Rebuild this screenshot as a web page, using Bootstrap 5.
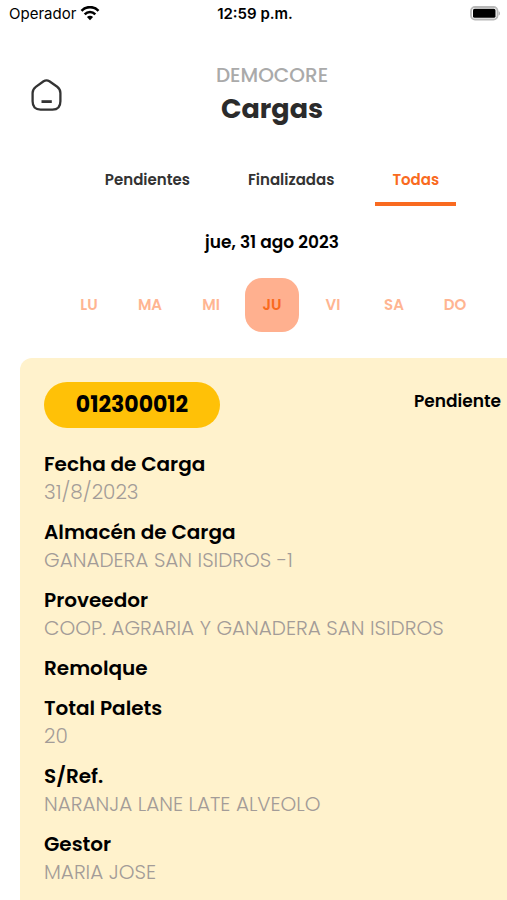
<!DOCTYPE html>
<html lang="es">
<head>
<meta charset="utf-8">
<meta name="viewport" content="width=device-width, initial-scale=1">
<title>Cargas</title>
<link href="https://cdn.jsdelivr.net/npm/bootstrap@5.3.0/dist/css/bootstrap.min.css" rel="stylesheet">
<style>
  body { font-family: Poppins, Inter, "Open Sans", sans-serif; color: #000; background: #fff; }
  .status-bar { height: 28px; font-family: Inter, sans-serif; font-size: 15px; line-height: 28px; padding: 0 6px 0 9px; }
  .status-side { flex: 1 1 0; }
  .app-header { padding: 34px 25px 0 31px; }
  .home-btn { margin-bottom: 2px; line-height: 0; }
  .company { font-size: 20px; line-height: 27px; color: #aaa; font-weight: 500; }
  .page-title { font-size: 27px; line-height: 40px; font-weight: 700; color: #2b2b2b; }
  .view-tabs { gap: 24px; padding: 33px 25px 0 62px; }
  .view-tabs .nav-link { padding: 6px 17px 10px; font-size: 15px; line-height: 24px; font-weight: 600; color: #333; border-bottom: 4px solid transparent; }
  .view-tabs .nav-link.active { color: #f96a20; border-color: #f96a20; }
  .day-title { font-size: 17px; line-height: 26px; font-weight: 600; padding: 23px 0 23px 37px; }
  .week { padding: 0 25px 0 62px; gap: 7px; }
  .day { width: 54px; height: 54px; border-radius: 17px; font-size: 15px; font-weight: 600; color: #ffb592; background: none; }
  .day[aria-pressed="true"] { background: #ffb08f; color: #f96a20; }
  .load-card { margin: 26px 0 0 20px; padding: 24px 6px 14px 24px; background: #fff2cc; border-radius: 12px 0 0 0; }
  .load-number { min-width: 176px; height: 46px; line-height: 46px; font-size: 22px; font-weight: 700; background: #ffc107; }
  .load-state { font-size: 17px; line-height: 38px; font-weight: 600; }
  .fields { font-size: 20px; line-height: 28px; padding-top: 22px; }
  .fields > div { margin-bottom: 12px; }
  .fields dt { font-weight: 600; }
  .fields dd { font-weight: 300; color: #a39c98; }
</style>
<script src="https://cdn.jsdelivr.net/npm/bootstrap@5.3.0/dist/js/bootstrap.bundle.min.js" defer></script>
</head>
<body class="d-flex flex-column min-vh-100">
  <div class="status-bar d-flex align-items-center">
    <div class="status-side d-flex align-items-center gap-1">
      <span>Operador</span>
      <svg width="20" height="16" viewBox="0 0 20 16" fill="none" stroke="#000" stroke-width="2.6" aria-label="Wi-Fi" role="img">
        <path d="M1.5 4.8C6.2-.1 13.8-.1 18.5 4.8"/>
        <path d="M4.7 8.3C7.7 5.3 12.3 5.3 15.3 8.3"/>
        <path d="M10 14.2L6.9 11C8.7 9.3 11.3 9.3 13.1 11Z" fill="#000" stroke="none"/>
      </svg>
    </div>
    <span class="fw-semibold">12:59 p.m.</span>
    <div class="status-side d-flex justify-content-end">
      <svg width="32" height="16" viewBox="0 0 32 16" role="img" aria-label="Batería">
        <rect x="2" y="1" width="26.5" height="12.5" rx="4" fill="#fff" stroke="#b8b8b8" stroke-width="1.8"/>
        <rect x="4" y="2.8" width="22.5" height="9" rx="1.6" fill="#000"/>
        <path d="M29.6 5.2C31.4 5.7 31.4 9.1 29.6 9.6Z" fill="#b0b0b0"/>
      </svg>
    </div>
  </div>

  <header class="app-header d-flex align-items-center">
    <button type="button" class="home-btn btn p-0 border-0" aria-label="Inicio">
      <svg width="31" height="32" viewBox="0 0 31 32" fill="none" stroke="#333" stroke-width="2.3" stroke-linejoin="round">
        <path d="M12.6 2.2Q15.5.4 18.4 2.2L26.2 7.8Q29.4 10.2 29.4 14V22.2Q29.4 30.6 21.5 30.6H9.5Q1.6 30.6 1.6 22.2V14Q1.6 10.2 4.8 7.8Z"/>
        <path d="M10.5 22.6H20.8" stroke-width="2.8"/>
      </svg>
    </button>
    <div class="flex-grow-1 text-center">
      <div class="company">DEMOCORE</div>
      <h1 class="page-title m-0">Cargas</h1>
    </div>
  </header>

  <nav class="view-tabs nav justify-content-center">
    <a class="nav-link" href="#pendientes">Pendientes</a>
    <a class="nav-link" href="#finalizadas">Finalizadas</a>
    <a class="nav-link active" href="#todas" aria-current="page">Todas</a>
  </nav>

  <main class="d-flex flex-column flex-grow-1" id="todas">
    <h2 class="day-title m-0 text-center">jue, 31 ago 2023</h2>
    <div class="week d-flex justify-content-center">
      <button type="button" class="day btn p-0 border-0" aria-pressed="false">LU</button>
      <button type="button" class="day btn p-0 border-0" aria-pressed="false">MA</button>
      <button type="button" class="day btn p-0 border-0" aria-pressed="false">MI</button>
      <button type="button" class="day btn p-0 border-0" aria-pressed="true">JU</button>
      <button type="button" class="day btn p-0 border-0" aria-pressed="false">VI</button>
      <button type="button" class="day btn p-0 border-0" aria-pressed="false">SA</button>
      <button type="button" class="day btn p-0 border-0" aria-pressed="false">DO</button>
    </div>

    <article class="load-card flex-grow-1">
      <div class="d-flex justify-content-between align-items-start">
        <span class="load-number rounded-pill text-center">012300012</span>
        <span class="load-state">Pendiente</span>
      </div>
      <dl class="fields m-0">
        <div><dt>Fecha de Carga</dt><dd class="m-0">31/8/2023</dd></div>
        <div><dt>Almacén de Carga</dt><dd class="m-0">GANADERA SAN ISIDROS -1</dd></div>
        <div><dt>Proveedor</dt><dd class="m-0">COOP. AGRARIA Y GANADERA SAN ISIDROS</dd></div>
        <div><dt>Remolque</dt><dd class="m-0"></dd></div>
        <div><dt>Total Palets</dt><dd class="m-0">20</dd></div>
        <div><dt>S/Ref.</dt><dd class="m-0">NARANJA LANE LATE ALVEOLO</dd></div>
        <div class="mb-0"><dt>Gestor</dt><dd class="m-0">MARIA JOSE</dd></div>
      </dl>
    </article>
  </main>
</body>
</html>
